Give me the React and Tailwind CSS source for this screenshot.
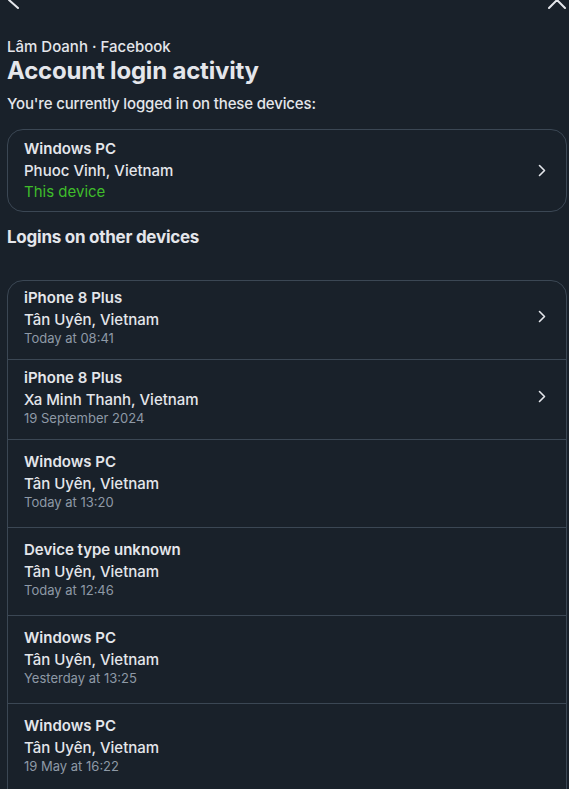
import React from "react";

const Chevron = () => (
  <svg width="8" height="13" viewBox="0 0 8 13" fill="none" className="shrink-0">
    <path d="M1.5 1.5 L6.5 6.5 L1.5 11.5" stroke="#e4e6eb" strokeWidth="1.6" strokeLinecap="round" strokeLinejoin="round" />
  </svg>
);

const others = [
  { name: "iPhone 8 Plus", loc: "Tân Uyên, Vietnam", time: "Today at 08:41", chev: true, pad: "pt-[6px] pb-[14px]" },
  { name: "iPhone 8 Plus", loc: "Xa Minh Thanh, Vietnam", time: "19 September 2024", chev: true, pad: "pt-[7px] pb-[14px]" },
  { name: "Windows PC", loc: "Tân Uyên, Vietnam", time: "Today at 13:20", pad: "pt-[11px] pb-[18px]" },
  { name: "Device type unknown", loc: "Tân Uyên, Vietnam", time: "Today at 12:46", pad: "pt-[11px] pb-[18px]" },
  { name: "Windows PC", loc: "Tân Uyên, Vietnam", time: "Yesterday at 13:25", pad: "pt-[11px] pb-[18px]" },
  { name: "Windows PC", loc: "Tân Uyên, Vietnam", time: "19 May at 16:22", pad: "pt-[11px] pb-[48px]" },
];

export default function App() {
  return (
    <div className="h-[789px] overflow-hidden bg-[#19212a] text-[#e4e6eb] font-['Inter',sans-serif] pl-[7px] pr-[2px]">
      <div className="flex justify-between items-center h-[24px] -mt-[12px] pr-[1px]">
        <svg width="16" height="24" viewBox="0 0 16 24" fill="none">
          <path d="M11 4 L2 12 L11 20" stroke="#e4e6eb" strokeWidth="2" strokeLinecap="round" strokeLinejoin="round" />
        </svg>
        <svg width="18" height="18" viewBox="0 0 18 18" fill="none">
          <path d="M1 1 L17 17 M17 1 L1 17" stroke="#e4e6eb" strokeWidth="2" strokeLinecap="round" />
        </svg>
      </div>
      <div className="pt-[25px] text-[15px] leading-[20px] font-medium">Lâm Doanh · Facebook</div>
      <div className="text-[24px] leading-[28px] font-bold tracking-[-0.2px]">Account login activity</div>
      <div className="mt-[9px] text-[15px] leading-[20px] font-medium tracking-[-0.15px]">You're currently logged in on these devices:</div>

      <div className="mt-[15px] rounded-[16px] border border-[#3b4754] flex items-center pl-[16px] pr-[20px] pt-[8px] pb-[9px]">
        <div className="flex-1">
          <div className="text-[15px] leading-[22px] font-semibold">Windows PC</div>
          <div className="text-[15px] leading-[22px] font-medium">Phuoc Vinh, Vietnam</div>
          <div className="text-[15px] leading-[20px] text-[#3fbd2a]">This device</div>
        </div>
        <Chevron />
      </div>

      <div className="mt-[14px] text-[17px] leading-[22px] font-bold tracking-[-0.25px]">Logins on other devices</div>

      <div className="mt-[32px] rounded-[16px] border border-[#3b4754] divide-y divide-[#3b4754]">
        {others.map((d, i) => (
          <div key={i} className={`flex items-center pl-[16px] pr-[20px] ${d.pad}`}>
            <div className="flex-1">
              <div className="text-[15px] leading-[22px] font-semibold">{d.name}</div>
              <div className="text-[15px] leading-[22px] font-medium">{d.loc}</div>
              <div className="text-[13px] leading-[14px] text-[#8e99a6]">{d.time}</div>
            </div>
            {d.chev && <Chevron />}
          </div>
        ))}
      </div>
    </div>
  );
}
